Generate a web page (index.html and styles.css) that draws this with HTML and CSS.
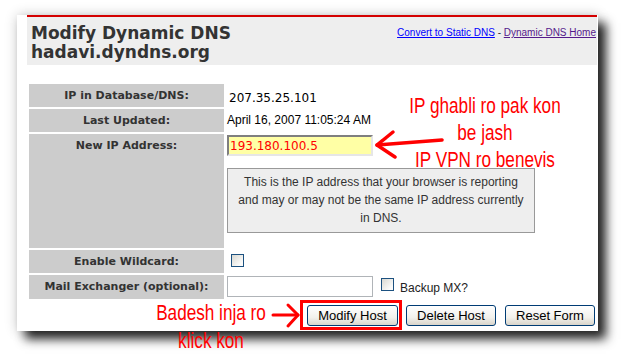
FILE: index.html
```html
<!DOCTYPE html>
<html lang="en">
<head>
  <meta charset="UTF-8">
  <title>Modify Dynamic DNS</title>
  <link rel="stylesheet" href="styles.css">
</head>
<body>
  <div class="panel">
    <div class="head">
      <h1>Modify Dynamic DNS<br>hadavi.dyndns.org</h1>
      <div class="links">
        <a href="#" class="link">Convert to Static DNS</a> - <a href="#" class="link visited">Dynamic DNS Home</a>
      </div>
    </div>

    <table class="form">
      <tr class="row">
        <th>IP in Database/DNS:</th>
        <td class="ip">207.35.25.101</td>
      </tr>
      <tr class="row">
        <th>Last Updated:</th>
        <td class="date">April 16, 2007 11:05:24 AM</td>
      </tr>
      <tr class="row-tall">
        <th>New IP Address:</th>
        <td class="field">
          <input type="text" class="ip-input" value="193.180.100.5">
          <div class="hint">This is the IP address that your browser is reporting<br>and may or may not be the same IP address currently<br>in DNS.</div>
        </td>
      </tr>
      <tr class="row">
        <th>Enable Wildcard:</th>
        <td class="check"><input type="checkbox" class="box"></td>
      </tr>
      <tr class="row-mx">
        <th>Mail Exchanger (optional):</th>
        <td class="field">
          <div class="mx">
            <input type="text" class="mx-input">
            <input type="checkbox" class="box mx-box">
            <span class="mx-label">Backup MX?</span>
          </div>
        </td>
      </tr>
    </table>

    <div class="actions">
      <button class="btn modify">Modify Host</button>
      <button class="btn delete">Delete Host</button>
      <button class="btn reset">Reset Form</button>
    </div>
  </div>

  <!-- hand-drawn notes on top of the screenshot -->
  <div class="note note-ip">IP ghabli ro pak kon<br>be jash<br>IP VPN ro benevis</div>
  <div class="note note-click">Badesh inja ro<br>klick kon</div>
  <svg class="marks" width="622" height="355" viewBox="0 0 622 355">
    <g fill="none" stroke="#ff0000" stroke-linecap="round" stroke-linejoin="round">
      <path d="M442 140 L377 145" stroke-width="3.5"/>
      <path d="M393 132 L377 145 L395 157" stroke-width="3.5"/>
      <path d="M273 315 L298 315" stroke-width="3"/>
      <path d="M288 305 L298 315 L288 326" stroke-width="3"/>
      <rect x="301.5" y="301.5" width="99" height="27" stroke-width="3" stroke-linecap="butt" stroke-linejoin="miter"/>
    </g>
  </svg>
</body>
</html>
```

FILE: styles.css
```css
body {
  margin: 0;
  background-color: #fff;
  position: relative;
  width: 622px;
  height: 355px;
  overflow: hidden;
  font-family: 'Liberation Sans', Arial, sans-serif;
}
.panel {
  margin: 15px 0 0 17px;
  width: 581px;
  height: 316px;
  box-sizing: border-box;
  padding: 0 1px 0 10px;
  background-color: #fff;
  box-shadow: 0 0 12px rgba(0, 0, 0, 0.2), 8px 8px 10px rgba(0, 0, 0, 0.85);
}
.head {
  display: flex;
  justify-content: space-between;
  height: 50px;
  box-sizing: border-box;
  border-top: 2px solid #d40000;
  background-color: #eee;
  padding: 0 1px 0 4px;
}
.head h1 {
  margin: 0;
  padding-top: 7px;
  font: bold 17px/19px 'DejaVu Sans', Verdana, sans-serif;
  color: #333;
}
.links {
  padding-top: 10px;
  font-size: 10px;
  line-height: 12px;
  color: #333;
}
.link {
  color: #0000ff;
}
.link.visited {
  color: #551a8b;
}
.form {
  width: 100%;
  margin-top: 17px;
  border-spacing: 2px;
}
.form th {
  width: 195px;
  box-sizing: border-box;
  background-color: #ccc;
  color: #333;
  font: bold 11px/13px 'DejaVu Sans', Verdana, sans-serif;
  text-align: center;
  vertical-align: top;
  padding: 5px 4px 0;
}
.form td {
  vertical-align: top;
  padding: 0 0 0 1px;
  font-size: 12px;
  line-height: 14px;
  color: #000;
}
.row {
  height: 23px;
}
.row-tall {
  height: 114px;
}
.row-mx {
  height: 24px;
}
.form td.ip {
  padding: 7px 0 0 3px;
  font: 12px/15px 'DejaVu Sans', Verdana, sans-serif;
}
.form td.date {
  padding-top: 4px;
}
.form td.field {
  padding-top: 1px;
}
.form td.check {
  padding: 4px 0 0 5px;
}
.ip-input {
  display: block;
  width: 146px;
  height: 21px;
  box-sizing: border-box;
  margin: 0;
  padding: 0 1px;
  border: 2px solid;
  border-color: #7f7f7f #e6e6e6 #e6e6e6 #7f7f7f;
  background-color: #ffffa5;
  color: #ff0000;
  font: 12px 'DejaVu Sans', Verdana, sans-serif;
  outline: none;
}
.hint {
  margin-top: 12px;
  width: 308px;
  height: 65px;
  box-sizing: border-box;
  padding-top: 4px;
  border: 1px solid #999;
  background-color: #eee;
  color: #333;
  font-size: 12px;
  line-height: 18px;
  text-align: center;
}
.box {
  appearance: none;
  -webkit-appearance: none;
  display: block;
  width: 13px;
  height: 13px;
  margin: 0;
  border: 1px solid #1c5180;
  background: linear-gradient(135deg, #d8d8d2, #fbfbfa 80%);
}
.mx {
  display: flex;
  align-items: flex-start;
}
.mx-input {
  width: 146px;
  height: 21px;
  box-sizing: border-box;
  margin: 0;
  border: 1px solid #b0b4b8;
  background-color: #fff;
}
.mx-box {
  margin: 2px 0 0 8px;
}
.mx-label {
  margin: 5px 0 0 6px;
  color: #222;
}
.actions {
  display: flex;
  justify-content: flex-end;
  margin-top: 4px;
  padding-right: 2px;
}
.btn {
  height: 21px;
  width: 90px;
  margin-left: 9px;
  padding: 0;
  border: 1px solid #003c74;
  border-radius: 3px;
  background: linear-gradient(#ffffff, #f2f1ec 60%, #d9d5cb);
  color: #000;
  font-family: 'Liberation Sans', Arial, sans-serif;
  font-size: 13px;
}
.btn.modify {
  width: 91px;
  margin-left: 0;
}
.btn.delete {
  margin-left: 8px;
}

/* annotations drawn over the page */
.note {
  position: absolute;
  color: #ff0000;
  font-size: 22px;
  text-align: center;
  transform: scaleX(0.78);
  white-space: nowrap;
}
.note-ip {
  left: 385px;
  top: 92px;
  width: 200px;
  line-height: 27px;
}
.note-click {
  left: 131px;
  top: 299px;
  width: 160px;
  line-height: 28px;
}
.marks {
  position: absolute;
  left: 0;
  top: 0;
  pointer-events: none;
}
```
